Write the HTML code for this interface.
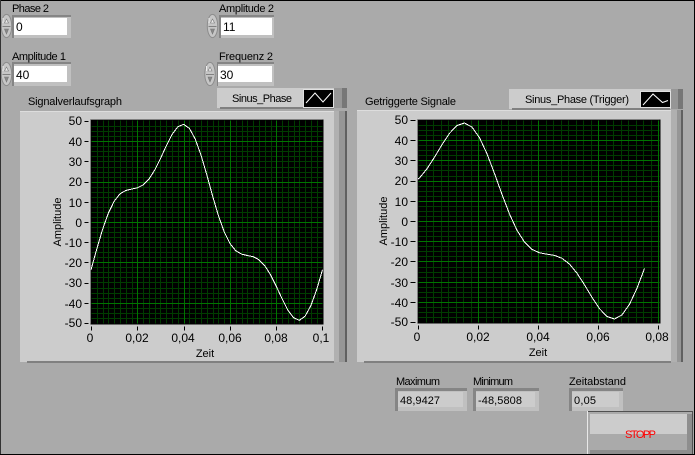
<!DOCTYPE html>
<html><head><meta charset="utf-8"><style>
html,body{margin:0;padding:0;background:#aaa;width:695px;height:455px;overflow:hidden}
svg{display:block}
text{font-family:"Liberation Sans",sans-serif;font-size:11px;fill:#000}
.n text,text.n{font-size:12px}
</style></head><body>
<svg width="695" height="455" viewBox="0 0 695 455" xmlns="http://www.w3.org/2000/svg">
<defs>
<g id="spin">
<ellipse cx="5.5" cy="12" rx="5.2" ry="11.6" fill="#c6c6c6" stroke="#8c8c8c"/>
<path d="M1.5 12.5H9.5" stroke="#808080" fill="none"/>
<path d="M2 9V4" stroke="#eee" fill="none"/>
<path d="M5.5 5L3.5 9H7.5Z" fill="#eee" stroke="#777" stroke-width=".6"/>
<path d="M5.5 20L3.5 15H7.5Z" fill="#888" stroke="#777" stroke-width=".6"/>
</g>
</defs>
<rect width="695" height="455" fill="#aaa"/>

<!-- numeric controls -->
<g shape-rendering="crispEdges">
<rect x="12" y="15" width="59" height="23" fill="#c0c0c0"/><path d="M12 15H71V17H14V38H12Z" fill="#858585"/><rect x="14" y="18" width="53" height="17" fill="#fff"/>
<rect x="12" y="62" width="59" height="24" fill="#c0c0c0"/><path d="M12 62H71V64H14V86H12Z" fill="#858585"/><rect x="14" y="66" width="53" height="16" fill="#fff"/>
<rect x="219" y="15" width="55" height="23" fill="#c0c0c0"/><path d="M219 15H274V17H221V38H219Z" fill="#858585"/><rect x="221" y="18" width="51" height="17" fill="#fff"/>
<rect x="217" y="62" width="57" height="24" fill="#c0c0c0"/><path d="M217 62H274V64H218V86H217Z" fill="#858585"/><rect x="218" y="66" width="54" height="16" fill="#fff"/>
</g>
<use href="#spin" x="1" y="14"/><use href="#spin" x="1" y="62"/><use href="#spin" x="207" y="14"/><use href="#spin" x="204.500" y="62"/>
<text x="12" y="12" textLength="37">Phase 2</text>
<text x="12" y="60" textLength="54">Amplitude 1</text>
<text x="219" y="12" textLength="55">Amplitude 2</text>
<text x="219" y="60" textLength="54">Frequenz 2</text>
<g class="n"><text x="16" y="31">0</text><text x="16" y="79">40</text><text x="223" y="31">11</text><text x="220" y="79">30</text></g>

<!-- panels -->
<g shape-rendering="crispEdges">
<rect x="20" y="111" width="314" height="251" fill="#ccc"/>
<rect x="20" y="111" width="314" height="1" fill="#ddd"/>
<rect x="27" y="361" width="307" height="2" fill="#808080"/>
<rect x="334" y="111" width="5" height="251" fill="#b0b0b0"/><rect x="339" y="111" width="6" height="251" fill="#969696"/><rect x="345" y="111" width="2" height="251" fill="#606060"/>
<rect x="357" y="110" width="314" height="252" fill="#ccc"/>
<rect x="357" y="110" width="314" height="1" fill="#ddd"/>
<rect x="364" y="361" width="307" height="2" fill="#808080"/>
<rect x="671" y="110" width="6" height="252" fill="#b0b0b0"/><rect x="677" y="110" width="4" height="252" fill="#969696"/><rect x="681" y="110" width="2" height="252" fill="#606060"/>

<!-- legends -->
<rect x="217" y="88" width="117" height="20" fill="#ccc"/><rect x="220" y="107" width="114" height="2" fill="#808080"/>
<rect x="334" y="88" width="8" height="20" fill="#969696"/><rect x="342" y="88" width="5" height="20" fill="#777"/>
<rect x="303" y="89" width="31" height="19" fill="#e0e0e0"/><rect x="304" y="90" width="29" height="17" fill="#000"/>
<rect x="509" y="89" width="162" height="20" fill="#ccc"/><rect x="512" y="108" width="158" height="2" fill="#808080"/>
<rect x="671" y="89" width="7" height="20" fill="#969696"/><rect x="678" y="89" width="5" height="20" fill="#777"/>
<rect x="640" y="91" width="31" height="17" fill="#e0e0e0"/><rect x="641" y="92" width="29" height="15" fill="#000"/>
</g>
<path d="M306 103L315 93L323 102L331 93" fill="none" stroke="#fff" stroke-width="1"/>
<path d="M643 105L653 94L662.500 102.500L668 100.500" fill="none" stroke="#fff" stroke-width="1"/>
<text x="232" y="102" textLength="60">Sinus_Phase</text>
<text x="525" y="103" textLength="104">Sinus_Phase (Trigger)</text>
<text x="28" y="105" textLength="94">Signalverlaufsgraph</text>
<text x="365" y="105" textLength="91">Getriggerte Signale</text>

<!-- plot 1 -->
<g shape-rendering="crispEdges" transform="translate(.5 .5)" fill="none">
<rect x="90" y="119" width="233" height="205" fill="#000" stroke="none"/>
<path stroke="#003c00" d="M97 120V323M103 120V323M108 120V323M114 120V323M120 120V323M126 120V323M132 120V323M143 120V323M149 120V323M155 120V323M160 120V323M166 120V323M172 120V323M178 120V323M189 120V323M195 120V323M201 120V323M207 120V323M213 120V323M218 120V323M224 120V323M236 120V323M242 120V323M247 120V323M253 120V323M259 120V323M265 120V323M271 120V323M282 120V323M288 120V323M294 120V323M299 120V323M305 120V323M311 120V323M317 120V323M91 126H322M91 131H322M91 136H322M91 146H322M91 151H322M91 156H322M91 161H322M91 167H322M91 172H322M91 177H322M91 187H322M91 192H322M91 197H322M91 202H322M91 207H322M91 212H322M91 217H322M91 227H322M91 232H322M91 237H322M91 242H322M91 247H322M91 252H322M91 257H322M91 267H322M91 272H322M91 277H322M91 282H322M91 288H322M91 293H322M91 298H322M91 308H322M91 313H322M91 318H322"/>
<path stroke="#007400" d="M137 120V323M184 120V323M230 120V323M276 120V323M91 141H322M91 182H322M91 222H322M91 262H322M91 303H322"/>
<path stroke="#808080" d="M90 119H322M90 119V323"/>
<path stroke="#000" d="M84 121H88M84 141H88M84 161H88M84 182H88M84 202H88M84 222H88M84 242H88M84 262H88M84 283H88M84 303H88M84 323H88M91 326V330M137 326V330M184 326V330M230 326V330M276 326V330M322 326V330"/>
</g>
<polyline fill="none" stroke="#fff" stroke-width="1" shape-rendering="crispEdges" points="91,269.800 96.800,248.900 102.600,229.300 108.400,213 114.200,201.200 119.900,193.900 125.700,190.500 131.500,189.100 137.300,187.900 143.100,185 148.900,179.200 154.700,170.100 160.500,158.500 166.200,146 172,134.600 177.800,126.800 183.600,124.300 189.400,128.400 195.200,139 201,155.100 206.800,174.800 212.500,195.700 218.300,215.300 224.100,231.600 229.900,243.400 235.700,250.700 241.500,254.100 247.300,255.500 253.100,256.700 258.800,259.600 264.600,265.400 270.400,274.500 276.200,286.100 282,298.600 287.800,310 293.600,317.800 299.400,320.300 305.100,316.200 310.900,305.600 316.700,289.500 322.500,269.800"/>

<!-- plot 2 -->
<g shape-rendering="crispEdges" transform="translate(.5 .5)" fill="none">
<rect x="417" y="119" width="243" height="204" fill="#000" stroke="none"/>
<path stroke="#003c00" d="M426 120V322M433 120V322M441 120V322M448 120V322M456 120V322M463 120V322M471 120V322M486 120V322M493 120V322M501 120V322M508 120V322M516 120V322M523 120V322M531 120V322M546 120V322M553 120V322M561 120V322M568 120V322M576 120V322M583 120V322M591 120V322M606 120V322M613 120V322M621 120V322M628 120V322M636 120V322M643 120V322M651 120V322M418 125H659M418 130H659M418 135H659M418 145H659M418 150H659M418 155H659M418 165H659M418 170H659M418 176H659M418 186H659M418 191H659M418 196H659M418 206H659M418 211H659M418 216H659M418 226H659M418 231H659M418 236H659M418 246H659M418 251H659M418 256H659M418 267H659M418 272H659M418 277H659M418 287H659M418 292H659M418 297H659M418 307H659M418 312H659M418 317H659"/>
<path stroke="#007400" d="M478 120V322M538 120V322M598 120V322M658 120V322M418 140H659M418 160H659M418 181H659M418 201H659M418 221H659M418 241H659M418 261H659M418 282H659M418 302H659"/>
<path stroke="#808080" d="M417 119H659M417 119V322"/>
<path stroke="#000" d="M410 120H415M410 140H415M410 160H415M410 181H415M410 201H415M410 221H415M410 241H415M410 261H415M410 282H415M410 302H415M410 322H415M418 325V329M478 325V329M538 325V329M598 325V329M658 325V329"/>
</g>
<polyline fill="none" stroke="#fff" stroke-width="1" shape-rendering="crispEdges" points="418,179 419.500,177.900 427,168.800 434.500,157.200 442,144.700 449.500,133.300 457,125.500 464.500,123 472,127.100 479.500,137.700 487,153.800 494.500,173.500 502,194.400 509.500,214 517,230.300 524.500,242.100 532,249.400 539.500,252.800 547,254.200 554.500,255.400 562,258.300 569.500,264.100 577,273.200 584.500,284.800 592,297.300 599.500,308.700 607,316.500 614.500,319 622,314.900 629.500,304.300 637,288.200 644.500,268.500"/>

<!-- axis labels plot 1 -->
<g text-anchor="end" class="n">
<text x="82" y="125">50</text><text x="82" y="146">40</text><text x="82" y="166">30</text><text x="82" y="186">20</text><text x="82" y="207">10</text><text x="82" y="227">0</text><text x="82" y="247">-10</text><text x="82" y="267">-20</text><text x="82" y="287">-30</text><text x="82" y="308">-40</text><text x="82" y="327">-50</text>
</g>
<g text-anchor="middle" class="n">
<text x="90" y="342">0</text><text x="137" y="342">0,02</text><text x="183" y="342">0,04</text><text x="230" y="342">0,06</text><text x="276" y="342">0,08</text><text x="321" y="342">0,1</text>
</g>
<text x="205" y="357" text-anchor="middle">Zeit</text>
<text transform="translate(61 222) rotate(-90)" text-anchor="middle">Amplitude</text>
<!-- axis labels plot 2 -->
<g text-anchor="end" class="n">
<text x="408" y="124">50</text><text x="408" y="145">40</text><text x="408" y="165">30</text><text x="408" y="185">20</text><text x="408" y="206">10</text><text x="408" y="226">0</text><text x="408" y="246">-10</text><text x="408" y="266">-20</text><text x="408" y="287">-30</text><text x="408" y="307">-40</text><text x="408" y="326">-50</text>
</g>
<g text-anchor="middle" class="n">
<text x="417" y="341">0</text><text x="478" y="341">0,02</text><text x="538" y="341">0,04</text><text x="598" y="341">0,06</text><text x="657" y="341">0,08</text>
</g>
<text x="538" y="356" text-anchor="middle">Zeit</text>
<text transform="translate(387 221) rotate(-90)" text-anchor="middle">Amplitude</text>

<!-- indicators -->
<text x="396" y="385" textLength="44">Maximum</text>
<text x="473" y="385" textLength="40">Minimum</text>
<text x="569" y="385" textLength="57">Zeitabstand</text>
<g shape-rendering="crispEdges">
<rect x="395" y="388" width="72" height="23" fill="#c0c0c0"/><path d="M395 388H467V391H398V411H395Z" fill="#858585"/><rect x="398" y="392" width="65" height="15" fill="#ccc"/>
<rect x="473" y="388" width="66" height="23" fill="#c0c0c0"/><path d="M473 388H539V391H476V411H473Z" fill="#858585"/><rect x="476" y="392" width="59" height="15" fill="#ccc"/>
<rect x="569" y="388" width="54" height="23" fill="#c0c0c0"/><path d="M569 388H623V391H572V411H569Z" fill="#858585"/><rect x="572" y="392" width="47" height="15" fill="#ccc"/>
</g>
<text x="400" y="404" textLength="40">48,9427</text>
<text x="478" y="404" textLength="44">-48,5808</text>
<text x="574" y="404" textLength="22">0,05</text>

<!-- STOP button -->
<g shape-rendering="crispEdges">
<rect x="587" y="411" width="106" height="43" fill="#aaa"/>
<rect x="590" y="414" width="97" height="20" fill="#ccc"/>
<rect x="587" y="411" width="106" height="1" fill="#505050"/>
<rect x="692" y="411" width="1" height="43" fill="#505050"/>
<rect x="587" y="411" width="1" height="43" fill="#e8e8e8"/>
<rect x="687" y="414" width="5" height="38" fill="#8e8e8e"/>
<rect x="590" y="450" width="102" height="4" fill="#8e8e8e"/>
</g>
<text x="625" y="438" textLength="31" style="fill:#f00">STOPP</text>

<!-- outer frame -->
<g shape-rendering="crispEdges">
<rect x="0" y="0" width="695" height="1" fill="#000"/>
<rect x="0" y="0" width="1" height="455" fill="#333"/>
<rect x="0" y="454" width="695" height="1" fill="#000"/>
<rect x="694" y="0" width="1" height="455" fill="#000"/>
</g>
</svg>
</body></html>
